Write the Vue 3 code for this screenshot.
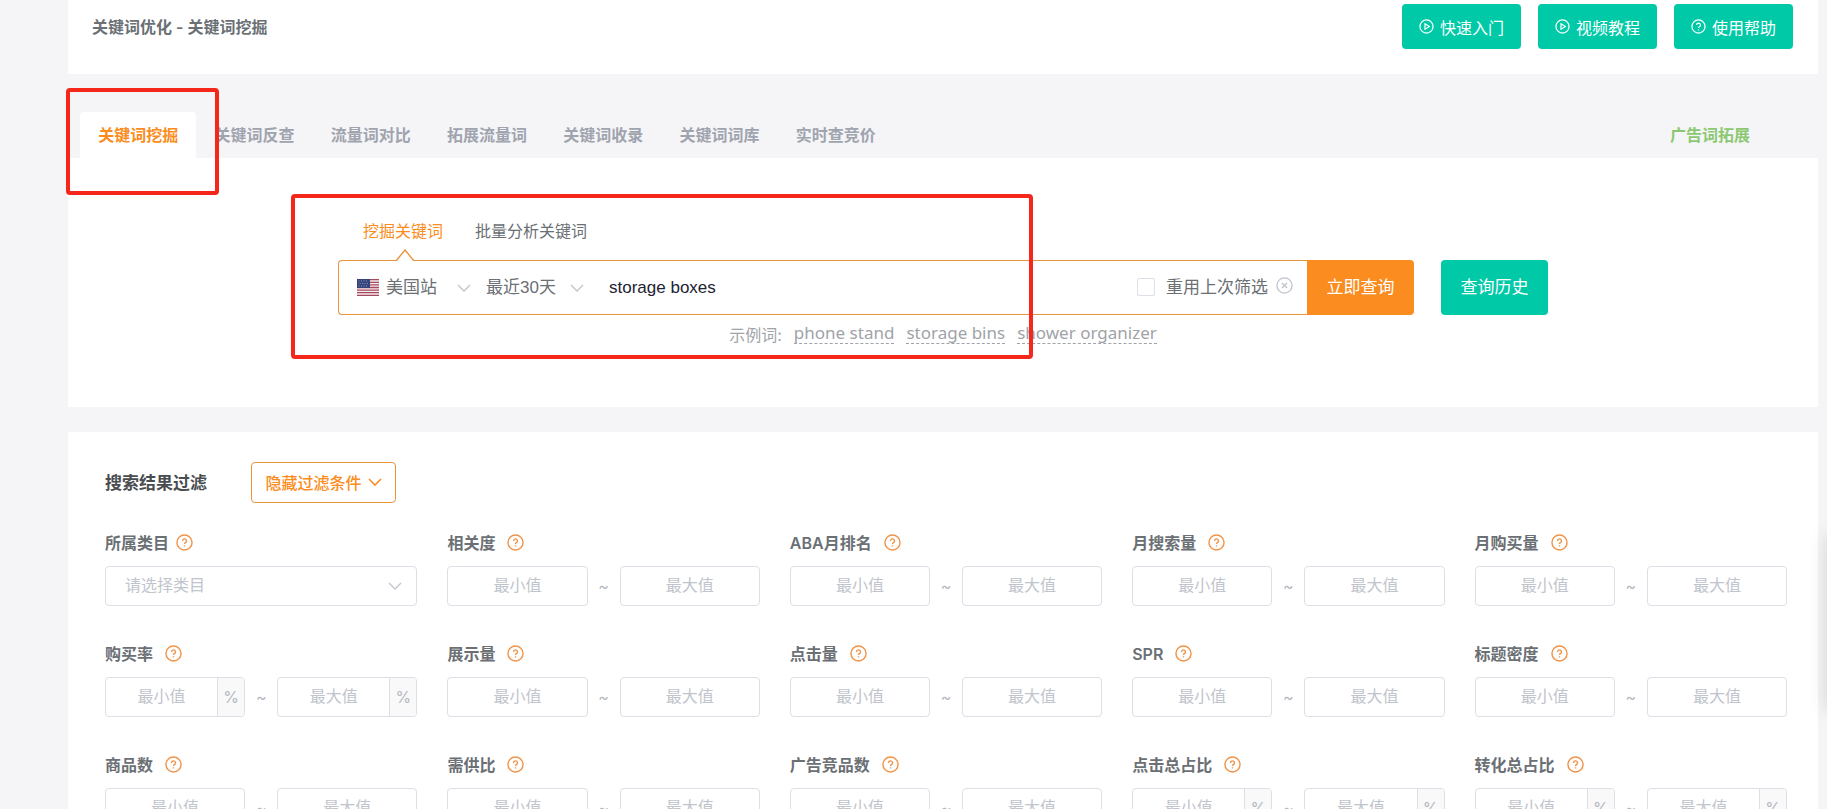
<template>
  <div class="page">
    <header class="page-header">
      <h1 class="page-title">关键词优化 - 关键词挖掘</h1>
      <div class="header-actions">
        <button v-for="item in headerButtons" :key="item.text" type="button" class="btn btn-help">
          <svg class="btn-icon" viewBox="0 0 16 16" aria-hidden="true">
            <circle cx="8" cy="8" r="7" />
            <path v-if="item.icon === 'play'" d="M6.4 5.1v5.8L11 8z" />
            <template v-else>
              <path d="M5.9 6.4a2.1 2.1 0 1 1 3.1 1.9c-.7.4-1 .7-1 1.4" />
              <path d="M8 11.1v1.2" />
            </template>
          </svg>
          {{ item.text }}
        </button>
      </div>
    </header>

    <nav class="tab-bar">
      <div class="tabs">
        <a
          v-for="tab in tabs"
          :key="tab"
          href="#"
          class="tab"
          :class="{ active: tab === activeTab }"
          @click.prevent="activeTab = tab"
        >{{ tab }}</a>
      </div>
      <a href="#" class="ad-link" @click.prevent>广告词拓展</a>
      <span class="mark mark-tab"></span>
    </nav>

    <section class="search-panel">
      <form class="search" @submit.prevent>
        <div class="search-modes">
          <button
            v-for="mode in modes"
            :key="mode"
            type="button"
            class="mode"
            :class="{ active: mode === activeMode }"
            @click="activeMode = mode"
          >
            {{ mode }}
            <svg v-if="mode === activeMode" class="mode-arrow" viewBox="0 0 20 12" aria-hidden="true">
              <path d="M1 12L10 1l9 11" />
            </svg>
          </button>
        </div>

        <div class="search-row">
          <div class="search-box">
            <svg class="flag" viewBox="0 0 22 17" aria-hidden="true">
              <rect width="22" height="17" fill="#f4eef0" />
              <path
                d="M0 .7h22M0 3.3h22M0 5.9h22M0 8.5h22M0 11.1h22M0 13.7h22M0 16.3h22"
                stroke="#a8485c"
                stroke-width="1.3"
              />
              <rect width="13" height="9" fill="#34447a" />
              <path d="M1.5 2h10M2.5 4.5h9M1.5 7h10" stroke="#8d99bd" stroke-width="1" stroke-dasharray="1 1.5" />
            </svg>
            <select v-model="site" class="plain-select site-select" aria-label="站点">
              <option>美国站</option>
              <option>英国站</option>
            </select>
            <svg class="chevron" viewBox="0 0 14 8" aria-hidden="true"><path d="M1 1l6 6 6-6" /></svg>
            <select v-model="period" class="plain-select period-select" aria-label="时间">
              <option>最近30天</option>
              <option>最近7天</option>
            </select>
            <svg class="chevron" viewBox="0 0 14 8" aria-hidden="true"><path d="M1 1l6 6 6-6" /></svg>
            <input v-model="keyword" type="text" class="keyword" aria-label="关键词" />
            <label class="reuse">
              <input v-model="reuse" type="checkbox" />
              重用上次筛选
            </label>
            <button type="button" class="clear" aria-label="清空" @click="reuse = false">
              <svg viewBox="0 0 18 18" aria-hidden="true">
                <circle cx="9" cy="9" r="8" />
                <path d="M6.3 6.3l5.4 5.4M11.7 6.3l-5.4 5.4" />
              </svg>
            </button>
          </div>
          <button type="submit" class="btn btn-search">立即查询</button>
          <button type="button" class="btn btn-history">查询历史</button>
        </div>

        <div class="examples">
          <span>示例词:</span>
          <a v-for="word in examples" :key="word" href="#" @click.prevent="keyword = word">{{ word }}</a>
        </div>
      </form>
      <span class="mark mark-search"></span>
    </section>

    <section class="filter-panel">
      <div class="filter-head">
        <h2>搜索结果过滤</h2>
        <button type="button" class="btn btn-toggle">
          隐藏过滤条件
          <svg class="chevron" viewBox="0 0 14 8" aria-hidden="true"><path d="M1 1l6 6 6-6" /></svg>
        </button>
      </div>

      <div class="filter-grid">
        <div v-for="(filter, i) in filters" :key="filter.label" class="filter">
          <div class="filter-label" :class="{ tight: filter.type === 'select' }">
            <label :for="`filter-${i}`">{{ filter.label }}</label>
            <svg class="help" viewBox="0 0 18 18" aria-hidden="true">
              <circle cx="9" cy="9" r="8" />
              <path d="M6.9 7.3a2.1 2.1 0 1 1 3.1 1.8c-.7.4-1 .7-1 1.4" />
              <path d="M9 11.9v1.3" />
            </svg>
          </div>

          <div v-if="filter.type === 'select'" class="category">
            <select :id="`filter-${i}`">
              <option>请选择类目</option>
            </select>
            <svg class="chevron" viewBox="0 0 14 8" aria-hidden="true"><path d="M1 1l6 6 6-6" /></svg>
          </div>

          <div v-else class="range">
            <div class="number">
              <input :id="`filter-${i}`" type="text" placeholder="最小值" />
              <span v-if="filter.type === 'percent'" class="unit">%</span>
            </div>
            <span class="tilde">~</span>
            <div class="number">
              <input type="text" placeholder="最大值" :aria-label="`${filter.label} 最大值`" />
              <span v-if="filter.type === 'percent'" class="unit">%</span>
            </div>
          </div>
        </div>
      </div>
    </section>
    <aside class="side-dock"></aside>
  </div>
</template>

<script setup>
import { ref } from 'vue';

const headerButtons = [
  { text: '快速入门', icon: 'play' },
  { text: '视频教程', icon: 'play' },
  { text: '使用帮助', icon: 'help' }
];

const tabs = [
  '关键词挖掘',
  '关键词反查',
  '流量词对比',
  '拓展流量词',
  '关键词收录',
  '关键词词库',
  '实时查竞价'
];
const activeTab = ref('关键词挖掘');

const modes = ['挖掘关键词', '批量分析关键词'];
const activeMode = ref('挖掘关键词');

const site = ref('美国站');
const period = ref('最近30天');
const keyword = ref('storage boxes');
const reuse = ref(false);
const examples = ['phone stand', 'storage bins', 'shower organizer'];

const filters = [
  { label: '所属类目', type: 'select' },
  { label: '相关度', type: 'number' },
  { label: 'ABA月排名', type: 'number' },
  { label: '月搜索量', type: 'number' },
  { label: '月购买量', type: 'number' },
  { label: '购买率', type: 'percent' },
  { label: '展示量', type: 'number' },
  { label: '点击量', type: 'number' },
  { label: 'SPR', type: 'number' },
  { label: '标题密度', type: 'number' },
  { label: '商品数', type: 'number' },
  { label: '需供比', type: 'number' },
  { label: '广告竞品数', type: 'number' },
  { label: '点击总占比', type: 'percent' },
  { label: '转化总占比', type: 'percent' }
];
</script>

<style>
body {
  background: #f5f5f8;
}

html,
body,
#app {
  height: 100%;
}
</style>

<style scoped>
.page {
  position: relative;
  height: 100%;
  overflow: hidden;
  box-sizing: border-box;
  padding: 0 9px 0 68px;
  font-family: Inter, "Noto Sans CJK SC", sans-serif;
  font-size: 16px;
  line-height: 24px;
  color: #6b7075;
}

.page *,
.page *::before {
  box-sizing: border-box;
}

button,
input,
select {
  font-family: inherit;
  font-size: inherit;
  color: inherit;
}

svg {
  display: block;
  flex: none;
  fill: none;
  stroke: currentColor;
}

a {
  text-decoration: none;
}

.btn {
  display: flex;
  align-items: center;
  justify-content: center;
  border: none;
  border-radius: 4px;
  padding: 0;
  color: #fff;
  cursor: pointer;
}

/* Header */
.page-header {
  display: flex;
  justify-content: space-between;
  align-items: flex-start;
  height: 74px;
  padding: 4px 25px 0 24px;
  background: #fff;
}

.page-title {
  margin: 0;
  font-size: 16px;
  line-height: 47px;
  font-weight: 600;
}

.header-actions {
  display: flex;
  gap: 17px;
}

.btn-help {
  gap: 6px;
  width: 119px;
  height: 45px;
  background: #00c9a7;
}

.btn-icon {
  width: 15px;
  height: 15px;
  stroke-width: 1.3;
}

/* Tabs */
.tab-bar {
  position: relative;
  display: flex;
  justify-content: space-between;
  margin-top: 38px;
  padding: 0 68px 0 12px;
}

.tabs {
  display: flex;
  width: 814px;
}

.tab {
  flex: 1;
  border-radius: 4px 4px 0 0;
  line-height: 46px;
  text-align: center;
  font-weight: 700;
  color: #9fa4ae;
}

.tab.active {
  background: #fff;
  color: #fa8c20;
}

.ad-link {
  line-height: 46px;
  font-weight: 700;
  color: #8cc872;
}

.mark {
  position: absolute;
  z-index: 2;
  border: 4px solid #f5261a;
  border-radius: 4px;
  pointer-events: none;
}

.mark-tab {
  left: -2px;
  top: -24px;
  width: 153px;
  height: 107px;
}

/* Search */
.search-panel {
  position: relative;
  padding: 61px 0 60px;
  background: #fff;
}

.mark-search {
  left: 223px;
  top: 36px;
  width: 742px;
  height: 165px;
}

.search {
  max-width: 1210px;
  margin: 0 auto;
}

.search-modes {
  display: flex;
  gap: 32px;
  padding-left: 25px;
}

.mode {
  position: relative;
  height: 41px;
  padding: 0 0 18px;
  border: none;
  background: none;
  line-height: 24px;
  cursor: pointer;
}

.mode.active {
  color: #fa8c20;
}

.mode-arrow {
  position: absolute;
  z-index: 1;
  left: 50%;
  bottom: -1px;
  width: 20px;
  height: 12px;
  margin-left: -8px;
  fill: #fff;
  color: #e8943c;
  stroke-width: 1.4;
}

.search-row {
  display: flex;
  height: 55px;
  font-size: 17px;
}

.search-box {
  display: flex;
  flex: 1;
  align-items: center;
  min-width: 0;
  padding: 0 14px 0 18px;
  border: 1px solid #e8943c;
  border-right: none;
  border-radius: 4px 0 0 4px;
}

.flag {
  width: 22px;
  height: 17px;
  margin-right: 7px;
  stroke: none;
}

.plain-select {
  appearance: none;
  padding: 0;
  border: none;
  background: none;
  outline: none;
  font-family: "Liberation Sans", "Noto Sans CJK SC", sans-serif;
}

.site-select {
  width: 71px;
}

.period-select {
  width: 84px;
  margin-left: 15px;
}

.chevron {
  width: 14px;
  height: 8px;
  color: #c0c4cc;
  stroke-width: 1.3;
}

.keyword {
  flex: 1;
  min-width: 0;
  margin-left: 25px;
  padding: 0;
  border: none;
  outline: none;
  font-family: "Liberation Sans", sans-serif;
  color: #1d2333;
}

.reuse {
  display: flex;
  align-items: center;
  gap: 11px;
  padding-bottom: 2px;
}

.reuse input {
  appearance: none;
  width: 18px;
  height: 18px;
  margin: 0;
  border: 1px solid #dcdfe6;
  border-radius: 2px;
  background: #fff;
}

.reuse input:checked {
  background: #fa8c20;
}

.clear {
  width: 17px;
  margin-left: 8px;
  padding: 0 0 4px;
  border: none;
  background: none;
  color: #c0c4cc;
  cursor: pointer;
}

.clear svg {
  width: 17px;
  height: 17px;
  stroke-width: 1.4;
}

.btn-search,
.btn-history {
  width: 107px;
  padding-bottom: 4px;
}

.btn-search {
  border-radius: 0 4px 4px 0;
  background: #fa8c20;
}

.btn-history {
  margin-left: 27px;
  background: #00c9a7;
}

.examples {
  display: flex;
  justify-content: center;
  gap: 12px;
  margin-top: 8px;
  color: #a0a3a8;
}

.examples a {
  height: 21px;
  border-bottom: 1px dashed #a0a3a8;
  font-family: "Noto Sans", sans-serif;
  font-size: 17px;
  line-height: 20px;
  color: inherit;
}

/* Filters */
.filter-panel {
  margin-top: 25px;
  padding: 30px 31px 30px 37px;
  background: #fff;
}

.filter-head {
  display: flex;
  align-items: center;
  gap: 44px;
}

.filter-head h2 {
  margin: 0;
  font-size: 17px;
  font-weight: 700;
  color: #4a4d50;
}

.btn-toggle {
  gap: 6px;
  width: 145px;
  height: 41px;
  padding-bottom: 1px;
  border: 1px solid #e8943c;
  background: #fff;
  color: #fa8c20;
  font-weight: 500;
}

.btn-toggle .chevron {
  color: inherit;
  stroke-width: 1.6;
}

.filter-grid {
  display: grid;
  grid-template-columns: repeat(5, minmax(0, 1fr));
  gap: 36px 30px;
  margin-top: 28px;
}

.filter-label {
  display: flex;
  align-items: center;
  gap: 12px;
  height: 23px;
  margin-bottom: 12px;
  font-weight: 600;
}

.filter-label.tight {
  gap: 7px;
}

.help {
  width: 17px;
  height: 17px;
  color: #f0944a;
  stroke-width: 1.5;
}

.category {
  display: flex;
  align-items: center;
  height: 40px;
  padding-right: 14px;
  border: 1px solid #dcdfe6;
  border-radius: 4px;
}

.category select {
  flex: 1;
  appearance: none;
  height: 100%;
  padding: 0 0 2px 19px;
  border: none;
  outline: none;
  background: none;
  color: #c0c4cc;
}

.range {
  display: flex;
  align-items: center;
}

.number {
  display: flex;
  flex: 1;
  min-width: 0;
  height: 40px;
  border: 1px solid #dcdfe6;
  border-radius: 4px;
  overflow: hidden;
}

.number input {
  flex: 1;
  min-width: 0;
  padding: 0 0 2px;
  border: none;
  outline: none;
  background: none;
  text-align: center;
}

.number input::placeholder {
  color: #c0c4cc;
}

.unit {
  width: 27px;
  border-left: 1px solid #dcdfe6;
  background: #f9f9f9;
  line-height: 38px;
  text-align: center;
  color: #b4b8bf;
}

.tilde {
  width: 32px;
  text-align: center;
  color: #b4b8bf;
}

/* Dock parked past the right edge, only its shadow shows */
.side-dock {
  position: absolute;
  left: 100%;
  top: 535px;
  width: 40px;
  height: 175px;
  box-shadow: 0 0 20px rgba(0, 0, 0, 0.14);
}
</style>
